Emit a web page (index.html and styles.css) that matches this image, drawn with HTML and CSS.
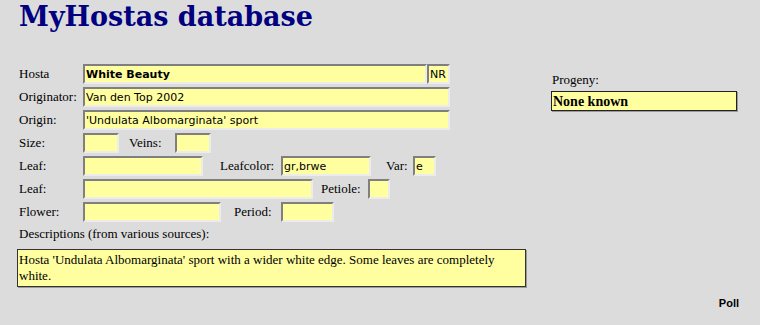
FILE: index.html
```html
<!DOCTYPE html>
<html lang="en">
<head>
    <meta charset="utf-8" />
    <link rel="stylesheet" href="styles.css">
    <title>MyHostas database</title>
</head>
<body>
    <h1 class="title">MyHostas database</h1>

    <div class="page">
        <div class="main">
            <div class="row">
                <span class="lbl">Hosta</span>
                <input class="fld bold w-name" value="White Beauty" readonly>
                <input class="fld w-nr" value="NR" readonly>
            </div>
            <div class="row">
                <span class="lbl">Originator:</span>
                <input class="fld w-full" value="Van den Top 2002" readonly>
            </div>
            <div class="row">
                <span class="lbl">Origin:</span>
                <input class="fld w-full" value="'Undulata Albomarginata' sport" readonly>
            </div>
            <div class="row">
                <span class="lbl">Size:</span>
                <input class="fld w-size" value="" readonly>
                <span class="sub veins">Veins:</span>
                <input class="fld w-size" value="" readonly>
            </div>
            <div class="row">
                <span class="lbl">Leaf:</span>
                <input class="fld w-leaf" value="" readonly>
                <span class="sub leafcolor">Leafcolor:</span>
                <input class="fld w-color" value="gr,brwe" readonly>
                <span class="sub var">Var:</span>
                <input class="fld w-var" value="e" readonly>
            </div>
            <div class="row">
                <span class="lbl">Leaf:</span>
                <input class="fld w-leaf2" value="" readonly>
                <span class="sub petiole">Petiole:</span>
                <input class="fld w-petiole" value="" readonly>
            </div>
            <div class="row">
                <span class="lbl">Flower:</span>
                <input class="fld w-flower" value="" readonly>
                <span class="sub period">Period:</span>
                <input class="fld w-period" value="" readonly>
            </div>

            <div class="desc-label">Descriptions (from various sources):</div>
            <div class="desc">Hosta 'Undulata Albomarginata' sport with a wider white edge. Some leaves are completely white.</div>
        </div>

        <div class="side">
            <div class="side-label">Progeny:</div>
            <div class="progeny">None known</div>
        </div>
    </div>

    <div class="poll">Poll</div>
</body>
</html>
```

FILE: styles.css
```css
body {
    background-color: #dcdcdc;
    margin: 0;
    font-family: "Liberation Serif", "Times New Roman", serif;
    font-size: 13px;
    color: #000000;
}

.title {
    font-family: "DejaVu Serif", Georgia, serif;
    font-size: 27px;
    line-height: 34px;
    font-weight: bold;
    color: #000080;
    margin: 0 0 30px 19px;
}

.page {
    display: flex;
    padding-left: 17px;
}

.main {
    width: 509px;
    display: flex;
    flex-direction: column;
    gap: 3px;
}

.row {
    display: flex;
    align-items: center;
    height: 20px;
}

.lbl {
    width: 64px;
    padding-left: 2px;
    flex-shrink: 0;
}

.sub {
    flex-shrink: 0;
}

.fld {
    box-sizing: border-box;
    height: 20px;
    margin: 0;
    padding: 0 1px;
    border: 2px solid;
    border-color: #7f7f7f #ececec #ececec #7f7f7f;
    background-color: #ffffa0;
    font-family: "DejaVu Sans", Verdana, sans-serif;
    font-size: 11px;
    color: #000000;
    outline: none;
    flex-shrink: 0;
}

.bold { font-weight: bold; }

.w-name { width: 344px; }
.w-nr { width: 23px; }
.w-full { width: 367px; }
.w-size { width: 36px; }
.w-leaf { width: 120px; }
.w-color { width: 90px; }
.w-var { width: 23px; }
.w-leaf2 { width: 230px; }
.w-petiole { width: 22px; }
.w-flower { width: 138px; }
.w-period { width: 53px; }

.veins { margin-left: 10px; width: 46px; }
.leafcolor { margin-left: 17px; width: 61px; }
.var { margin-left: 15px; width: 27px; }
.petiole { margin-left: 8px; width: 47px; }
.period { margin-left: 13px; width: 47px; }

.desc-label {
    padding-left: 2px;
    line-height: 16px;
    margin-top: 1px;
}

.desc {
    margin-top: 4px;
    border: 1px solid #333333;
    box-shadow: 1px 1px 0 #9a9a9a;
    background-color: #ffffa0;
    padding: 2px 0 2px 1px;
    line-height: 16px;
}

.side {
    margin-left: 25px;
    padding-top: 8px;
}

.side-label {
    padding-left: 1px;
    line-height: 16px;
}

.progeny {
    box-sizing: border-box;
    width: 186px;
    height: 20px;
    margin-top: 3px;
    border: 1px solid #222222;
    box-shadow: 1px 1px 0 #9a9a9a;
    background-color: #ffffa0;
    font-size: 14px;
    font-weight: bold;
    line-height: 19px;
    padding-left: 1px;
}

.poll {
    text-align: right;
    padding-right: 21px;
    margin-top: 10px;
    font-family: "Liberation Sans", Arial, sans-serif;
    font-size: 11px;
    font-weight: bold;
}
```
